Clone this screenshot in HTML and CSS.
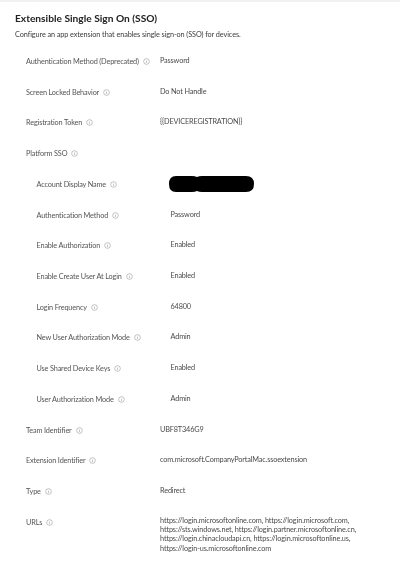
FILE: index.html
```html
<!DOCTYPE html>
<html lang="en">
<head>
<meta charset="utf-8">
<title>Extensible Single Sign On (SSO)</title>
<link rel="stylesheet" href="styles.css">
</head>
<body>
<svg width="0" height="0" class="defs"><symbol id="info" viewBox="0 0 16 16"><circle cx="8" cy="8" r="6.5" fill="none" stroke="currentColor"/><path d="M8 7v4.5M8 4.5v1.2" stroke="currentColor" fill="none"/></symbol></svg>
<main class="panel">
<h1 class="title">Extensible Single Sign On (SSO)</h1>
<p class="desc">Configure an app extension that enables single sign-on (SSO) for devices.</p>
<div class="rows">
<div class="row"><div class="label">Authentication Method (Deprecated)<svg class="info"><use href="#info"/></svg></div><div class="value">Password</div></div>
<div class="row"><div class="label">Screen Locked Behavior<svg class="info"><use href="#info"/></svg></div><div class="value">Do Not Handle</div></div>
<div class="row"><div class="label">Registration Token<svg class="info"><use href="#info"/></svg></div><div class="value">{{DEVICEREGISTRATION}}</div></div>
<div class="row"><div class="label">Platform SSO<svg class="info"><use href="#info"/></svg></div><div class="value"></div></div>
<div class="row nested"><div class="label">Account Display Name<svg class="info"><use href="#info"/></svg></div><div class="value"><svg class="redact" viewBox="0 0 86 18"><path d="M7 1h16q3 0 5 1 2-1 5-1h44q8 0 8 8t-8 8H33q-3 0-5-1-2 1-5 1H7q-7 0-7-8t7-8z" fill="#000"/></svg></div></div>
<div class="row nested"><div class="label">Authentication Method<svg class="info"><use href="#info"/></svg></div><div class="value">Password</div></div>
<div class="row nested"><div class="label">Enable Authorization<svg class="info"><use href="#info"/></svg></div><div class="value">Enabled</div></div>
<div class="row nested"><div class="label">Enable Create User At Login<svg class="info"><use href="#info"/></svg></div><div class="value">Enabled</div></div>
<div class="row nested"><div class="label">Login Frequency<svg class="info"><use href="#info"/></svg></div><div class="value">64800</div></div>
<div class="row nested"><div class="label">New User Authorization Mode<svg class="info"><use href="#info"/></svg></div><div class="value">Admin</div></div>
<div class="row nested"><div class="label">Use Shared Device Keys<svg class="info"><use href="#info"/></svg></div><div class="value">Enabled</div></div>
<div class="row nested"><div class="label">User Authorization Mode<svg class="info"><use href="#info"/></svg></div><div class="value">Admin</div></div>
<div class="row"><div class="label">Team Identifier<svg class="info"><use href="#info"/></svg></div><div class="value">UBF8T346G9</div></div>
<div class="row"><div class="label">Extension Identifier<svg class="info"><use href="#info"/></svg></div><div class="value">com.microsoft.CompanyPortalMac.ssoextension</div></div>
<div class="row"><div class="label">Type<svg class="info"><use href="#info"/></svg></div><div class="value">Redirect</div></div>
<div class="row"><div class="label">URLs<svg class="info"><use href="#info"/></svg></div><div class="value urls">https://login.microsoftonline.com, https://login.microsoft.com,<br>https://sts.windows.net, https://login.partner.microsoftonline.cn,<br>https://login.chinacloudapi.cn, https://login.microsoftonline.us,<br>https://login-us.microsoftonline.com</div></div>
</div>
</main>
</body>
</html>
```
FILE: styles.css
```css
html, body { margin: 0; padding: 0; background: #fff; }
body { width: 400px; height: 571px; overflow: hidden; font-family: "Lato", "Open Sans", sans-serif; color: #4a4a4a; }
.defs { position: absolute; }
.panel { border-top: 2px solid #f1f1f1; padding: 9px 0 0 15px; filter: blur(0.35px); }
.title { margin: 0; font-size: 10.2px; line-height: 15px; font-weight: 700; color: #222; }
.desc { margin: 3px 0 0; font-size: 7.3px; letter-spacing: -0.09px; line-height: 11px; color: #3c3c3c; }
.rows { margin-top: 15px; }
.row { display: grid; grid-template-columns: 134px 1fr; height: 30.72px; padding-left: 11px; font-size: 7.3px; letter-spacing: -0.15px; line-height: 11px; }
.row.nested { padding-left: 21.5px; }
.label { display: flex; align-items: center; align-self: start; height: 11px; padding-top: 1px; white-space: nowrap; color: #555; }
.value { white-space: nowrap; color: #4a4a4a; }
.urls { line-height: 9.3px; letter-spacing: -0.12px; }
.info { width: 7px; height: 7px; margin-left: 4px; color: #777; flex: none; }
.redact { display: block; width: 86px; height: 18px; margin: -3px 0 0 -2px; }
```
